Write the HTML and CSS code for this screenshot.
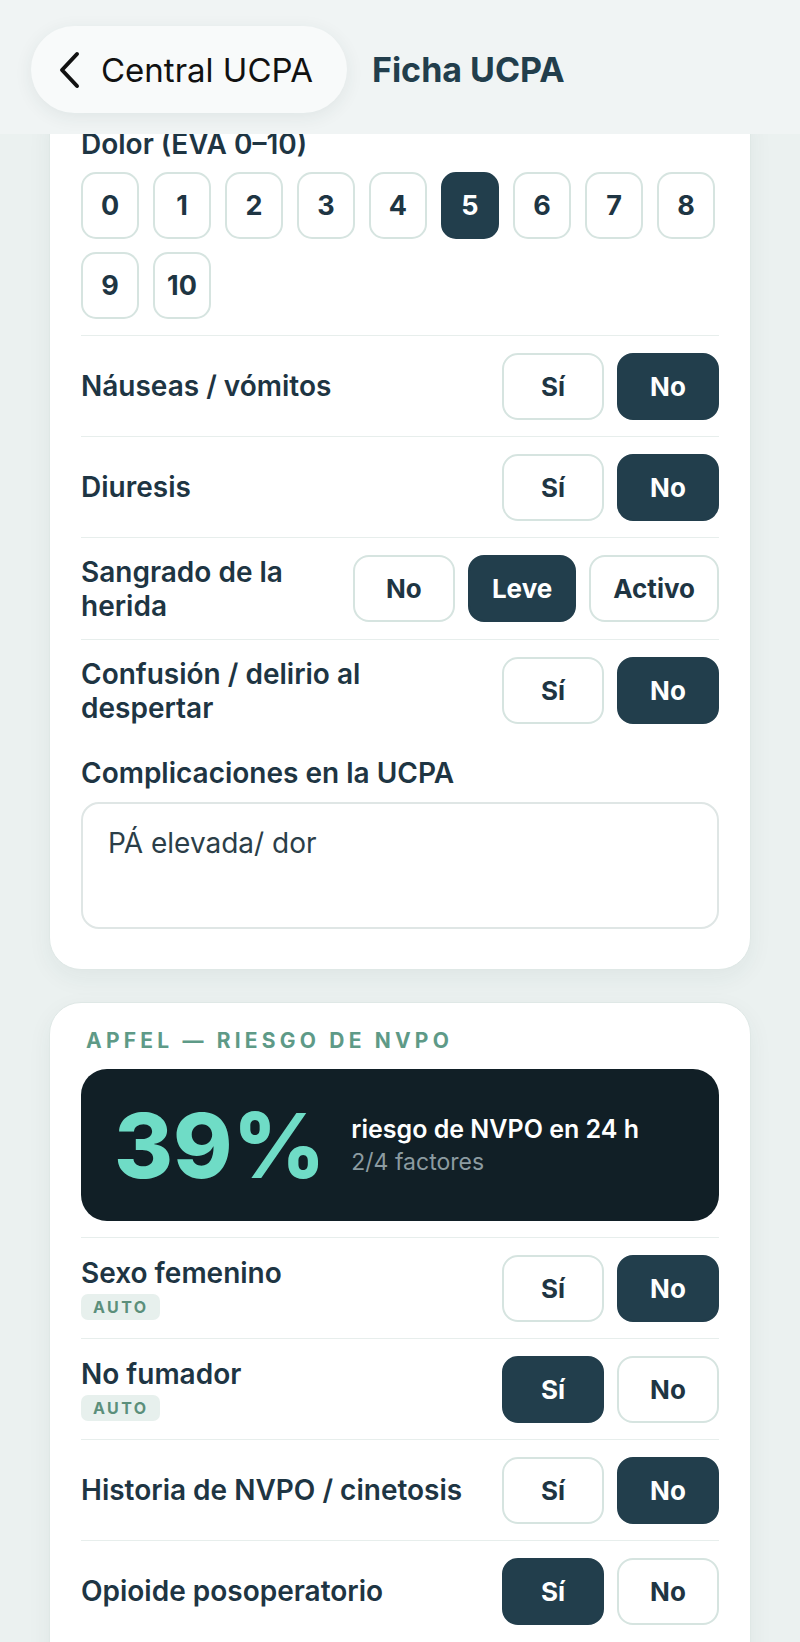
FILE: index.html
```html
<!DOCTYPE html>
<html>
<head>
<meta charset="utf-8">
<link rel="stylesheet" href="styles.css">
</head>
<body>

<div class="topbar">
    <button class="back">
        <svg width="24" height="38" viewBox="0 0 24 38">
            <path d="M20 3 L5 19 L20 35" fill="none" stroke="#111" stroke-width="4" stroke-linecap="round" stroke-linejoin="round"/>
        </svg>
        <span>Central UCPA</span>
    </button>
    <div class="title">Ficha UCPA</div>
</div>

<div class="page">

    <div class="card first">
        <div class="label">Dolor (EVA 0–10)</div>
        <div class="eva">
            <button class="opt">0</button>
            <button class="opt">1</button>
            <button class="opt">2</button>
            <button class="opt">3</button>
            <button class="opt">4</button>
            <button class="opt on">5</button>
            <button class="opt">6</button>
            <button class="opt">7</button>
            <button class="opt">8</button>
            <button class="opt">9</button>
            <button class="opt">10</button>
        </div>

        <div class="row">
            <div class="label">Náuseas / vómitos</div>
            <div class="choices">
                <button class="opt">Sí</button>
                <button class="opt on">No</button>
            </div>
        </div>

        <div class="row">
            <div class="label">Diuresis</div>
            <div class="choices">
                <button class="opt">Sí</button>
                <button class="opt on">No</button>
            </div>
        </div>

        <div class="row">
            <div class="label">Sangrado de la herida</div>
            <div class="choices">
                <button class="opt">No</button>
                <button class="opt on">Leve</button>
                <button class="opt">Activo</button>
            </div>
        </div>

        <div class="row">
            <div class="label">Confusión / delirio al despertar</div>
            <div class="choices">
                <button class="opt">Sí</button>
                <button class="opt on">No</button>
            </div>
        </div>

        <div class="label notes-label">Complicaciones en la UCPA</div>
        <textarea class="notes">PÁ elevada/ dor</textarea>
    </div>

    <div class="card">
        <div class="section">APFEL — RIESGO DE NVPO</div>

        <div class="score">
            <div class="pct">39%</div>
            <div>
                <div class="score-main">riesgo de NVPO en 24 h</div>
                <div class="score-sub">2/4 factores</div>
            </div>
        </div>

        <div class="row">
            <div>
                <div class="label">Sexo femenino</div>
                <span class="auto">AUTO</span>
            </div>
            <div class="choices">
                <button class="opt">Sí</button>
                <button class="opt on">No</button>
            </div>
        </div>

        <div class="row">
            <div>
                <div class="label">No fumador</div>
                <span class="auto">AUTO</span>
            </div>
            <div class="choices">
                <button class="opt on">Sí</button>
                <button class="opt">No</button>
            </div>
        </div>

        <div class="row">
            <div class="label">Historia de NVPO / cinetosis</div>
            <div class="choices">
                <button class="opt">Sí</button>
                <button class="opt on">No</button>
            </div>
        </div>

        <div class="row">
            <div class="label">Opioide posoperatorio</div>
            <div class="choices">
                <button class="opt on">Sí</button>
                <button class="opt">No</button>
            </div>
        </div>
    </div>

</div>

</body>
</html>
```

FILE: styles.css
```css
body {
    margin: 0;
    background-color: #ebf1f0;
    font-family: Inter, "Noto Sans", sans-serif;
    color: #1e3543;
}

/* header */

.topbar {
    position: fixed;
    top: 0;
    left: 0;
    right: 0;
    height: 134px;
    z-index: 2;
    display: flex;
    align-items: center;
    padding: 5px 0 0 31px;
    box-sizing: border-box;
    background-color: #f0f4f4;
}

.back {
    display: flex;
    align-items: center;
    gap: 20px;
    height: 87px;
    padding: 0 34px 0 26px;
    border: none;
    border-radius: 44px;
    background-color: #f8fafa;
    box-shadow: 0 4px 18px rgba(40, 60, 60, 0.08);
    font-family: Inter, sans-serif;
    font-size: 33px;
    color: #111;
}

.title {
    margin-left: 25px;
    font-size: 34px;
    font-weight: 700;
    color: #223e4c;
}

/* cards */

.page {
    padding: 96px 49px 40px;
}

.card {
    background-color: #fff;
    border: 1.5px solid #dfe8e6;
    border-radius: 32px;
    padding: 25px 31px 40px;
    box-shadow: 0 8px 24px rgba(40, 70, 70, 0.06);
}

.card.first {
    padding-top: 30px;
    margin-bottom: 32px;
}

.label {
    font-size: 28px;
    font-weight: 600;
    line-height: 34px;
    color: #1e3543;
}

button {
    font-family: inherit;
}

.opt {
    height: 67px;
    min-width: 102px;
    padding: 0 22px;
    border: 2.5px solid #d6e4e0;
    border-radius: 16px;
    background-color: #fff;
    font-size: 26px;
    font-weight: 700;
    color: #1e3543;
}

.opt.on {
    background-color: #223e4c;
    border-color: #223e4c;
    color: #fff;
}

.eva {
    display: flex;
    flex-wrap: wrap;
    gap: 13px 14px;
    margin: 11px 0 16px;
}

.eva .opt {
    width: 58px;
    min-width: 0;
    padding: 0;
    border-radius: 15px;
    font-size: 27px;
}

.row {
    display: flex;
    align-items: center;
    justify-content: space-between;
    gap: 18px;
    padding: 16.5px 0;
    border-top: 1.5px solid #e7eeec;
}

.choices {
    display: flex;
    gap: 13px;
    flex-shrink: 0;
}

.notes-label {
    margin-top: 15px;
}

.notes {
    display: block;
    box-sizing: border-box;
    width: 100%;
    height: 127px;
    margin-top: 12px;
    padding: 22px 25px;
    border: 2px solid #dfe6e5;
    border-radius: 18px;
    resize: none;
    font-family: Inter, sans-serif;
    font-size: 28px;
    color: #2b3e48;
}

/* apfel */

.section {
    font-size: 21px;
    font-weight: 700;
    letter-spacing: 0.2em;
    line-height: 26px;
    color: #5e9a87;
    margin-left: 5px;
    margin-bottom: 15px;
}

.score {
    display: flex;
    align-items: center;
    gap: 26px;
    height: 152px;
    padding: 0 33px;
    margin-bottom: 16px;
    border-radius: 26px;
    background-color: #111f26;
}

.pct {
    font-size: 90px;
    font-weight: 800;
    color: #6fdcc6;
}

.score-main {
    font-size: 25px;
    font-weight: 600;
    line-height: 32px;
    color: #fff;
}

.score-sub {
    margin-top: 2px;
    font-size: 23px;
    line-height: 30px;
    color: #8c9ba1;
}

.auto {
    display: inline-block;
    margin-top: 4px;
    padding: 2px 12px;
    border-radius: 7px;
    background-color: #e7f0ed;
    font-size: 16px;
    font-weight: 700;
    letter-spacing: 0.15em;
    line-height: 22px;
    color: #5b8f7b;
}
```
